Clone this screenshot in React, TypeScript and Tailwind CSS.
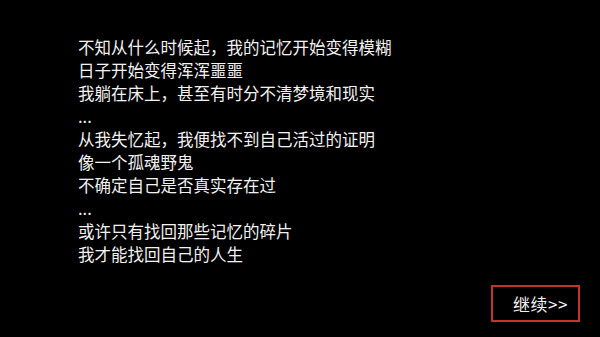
export default function App() {
  const lines = [
    '不知从什么时候起，我的记忆开始变得模糊',
    '日子开始变得浑浑噩噩',
    '我躺在床上，甚至有时分不清梦境和现实',
    '...',
    '从我失忆起，我便找不到自己活过的证明',
    '像一个孤魂野鬼',
    '不确定自己是否真实存在过',
    '...',
    '或许只有找回那些记忆的碎片',
    '我才能找回自己的人生',
  ];

  return (
    <main
      className="relative h-[337px] w-[600px] overflow-hidden bg-black text-[#f2f2f2]"
      style={{ fontFamily: '"Noto Sans CJK SC", "Noto Sans", sans-serif' }}
    >
      <div className="pl-[78px] pt-[36px] text-[16.5px] leading-[23px]">
        {lines.map((line, i) => (
          <p key={i}>{line}</p>
        ))}
      </div>
      <button className="absolute left-[491px] top-[285px] flex h-[37px] w-[89px] items-center justify-center border-2 border-[#c8322d] pl-[10px] text-[17px] tracking-[0.5px] text-[#f2f2f2]">
        继续&gt;&gt;
      </button>
    </main>
  );
}
